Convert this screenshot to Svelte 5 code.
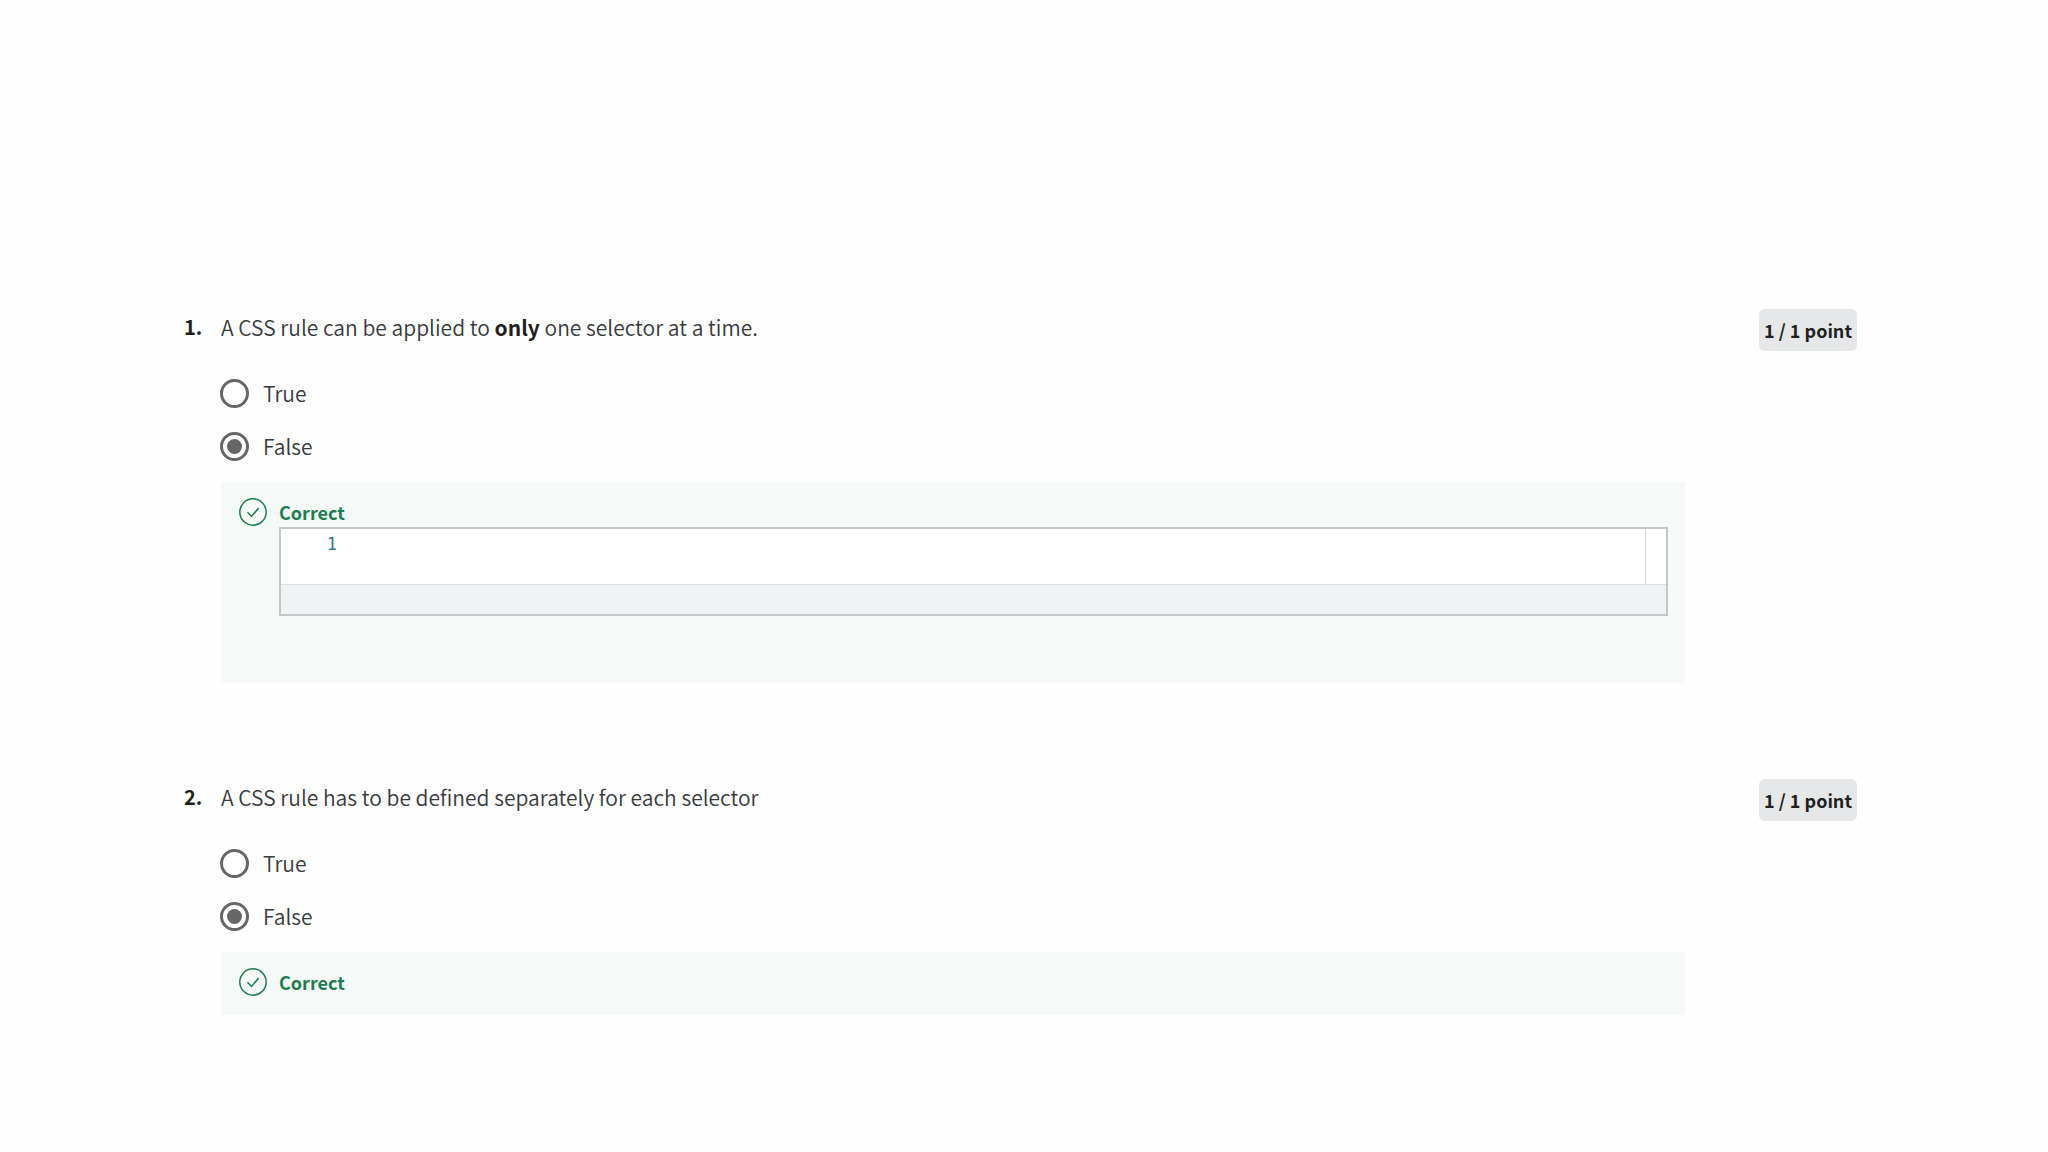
<script lang="ts">
	type Part = { text: string; bold?: boolean };

	type Question = {
		id: number;
		prompt: Part[];
		options: string[];
		answer: string;
		score: string;
		hasEditor: boolean;
	};

	let questions = $state<Question[]>([
		{
			id: 1,
			prompt: [
				{ text: 'A CSS rule can be applied to ' },
				{ text: 'only', bold: true },
				{ text: ' one selector at a time.' }
			],
			options: ['True', 'False'],
			answer: 'False',
			score: '1 / 1 point',
			hasEditor: true
		},
		{
			id: 2,
			prompt: [{ text: 'A CSS rule has to be defined separately for each selector' }],
			options: ['True', 'False'],
			answer: 'False',
			score: '1 / 1 point',
			hasEditor: false
		}
	]);

	let code = $state('');
	const lines = $derived(code.split('\n'));
</script>

<main class="quiz">
	{#each questions as question (question.id)}
		<section class="question">
			<span class="number">{question.id}.</span>
			<fieldset class="body">
				<legend class="prompt">
					{#each question.prompt as part}{#if part.bold}<strong>{part.text}</strong>{:else}{part.text}{/if}{/each}
				</legend>
				<div class="options">
					{#each question.options as option (option)}
						<label class="option">
							<input
								type="radio"
								name="question-{question.id}"
								value={option}
								bind:group={question.answer}
							/>
							<span>{option}</span>
						</label>
					{/each}
				</div>
				<div class="feedback">
					<svg class="check" viewBox="0 0 28 28" aria-hidden="true">
						<circle cx="14" cy="14" r="13.2" />
						<path d="M8.5 14.2l4 4.2 7.2-8.4" />
					</svg>
					<div class="feedback-main">
						<strong class="verdict">Correct</strong>
						{#if question.hasEditor}
							<div class="editor">
								<div class="code">
									<div class="gutter">
										{#each lines as _, i}<div>{i + 1}</div>{/each}
									</div>
									<textarea aria-label="Code" spellcheck="false" bind:value={code}></textarea>
									<div class="ruler"></div>
								</div>
								<div class="output"></div>
							</div>
						{/if}
					</div>
				</div>
			</fieldset>
			<span class="score">{question.score}</span>
		</section>
	{/each}
</main>

<style>
	:global(body) {
		margin: 0;
		background: #fefefe;
	}

	.quiz {
		display: flex;
		flex-direction: column;
		gap: 96px;
		padding: 309px 191px 96px 184px;
		font-family: 'Noto Sans CJK JP', 'Noto Sans', sans-serif;
		font-size: 21px;
		font-weight: 350;
		line-height: 36px;
		color: #373a3c;
	}

	.question {
		display: grid;
		grid-template-columns: 37px minmax(0, 1fr) 172px;
		align-items: start;
	}

	.number {
		font-size: 20px;
		font-weight: 700;
		color: #1f1f1f;
	}

	.body {
		min-width: 0;
		margin: 0;
		padding: 0;
		border: 0;
	}

	.prompt {
		padding: 0;
	}

	.prompt strong {
		font-weight: 700;
		color: #1f1f1f;
	}

	.options {
		display: flex;
		flex-direction: column;
		gap: 17px;
		padding: 30px 0 18px;
	}

	.option {
		display: flex;
		align-items: center;
		gap: 14px;
		width: fit-content;
	}

	input[type='radio'] {
		appearance: none;
		display: grid;
		place-items: center;
		box-sizing: border-box;
		width: 29px;
		height: 29px;
		margin: 0 0 0 -1px;
		border: 3px solid #666;
		border-radius: 50%;
		background: #fff;
	}

	input[type='radio']:checked::before {
		content: '';
		width: 15px;
		height: 15px;
		border-radius: 50%;
		background: #666;
	}

	.feedback {
		display: flex;
		gap: 12px;
		padding: 16px 17px 18px 18px;
		background: #f5faf8;
	}

	.check {
		flex: none;
		width: 28px;
		height: 28px;
		fill: none;
		stroke: #1d7c50;
		stroke-width: 1.5;
	}

	.feedback-main {
		flex: 1;
		min-width: 0;
	}

	.verdict {
		display: block;
		font-size: 18px;
		font-weight: 700;
		line-height: 29px;
		color: #1d7c50;
	}

	.editor {
		margin-bottom: 49px;
		border: 2px solid #c4c7c7;
	}

	.code {
		display: flex;
		min-height: 55px;
		background: #fff;
	}

	.gutter {
		width: 76px;
		padding-right: 20px;
		box-sizing: border-box;
		padding-top: 2px;
		font-family: 'DejaVu Sans Mono', monospace;
		font-size: 17px;
		line-height: 26px;
		text-align: right;
		color: #2f7596;
	}

	textarea {
		flex: 1;
		min-width: 0;
		height: 55px;
		box-sizing: border-box;
		padding: 2px 0;
		border: 0;
		outline: 0;
		resize: none;
		background: none;
		font-family: 'DejaVu Sans Mono', monospace;
		font-size: 17px;
		line-height: 26px;
	}

	.ruler {
		width: 20px;
		border-left: 1px solid #d4d6d6;
	}

	.output {
		height: 29px;
		border-top: 1px solid #dcdede;
		background: #f1f2f3;
	}

	.score {
		justify-self: end;
		padding: 3px 5px;
		border-radius: 6px;
		background: #e5e7e8;
		font-size: 18px;
		font-weight: 700;
		color: #1f1f1f;
	}
</style>
